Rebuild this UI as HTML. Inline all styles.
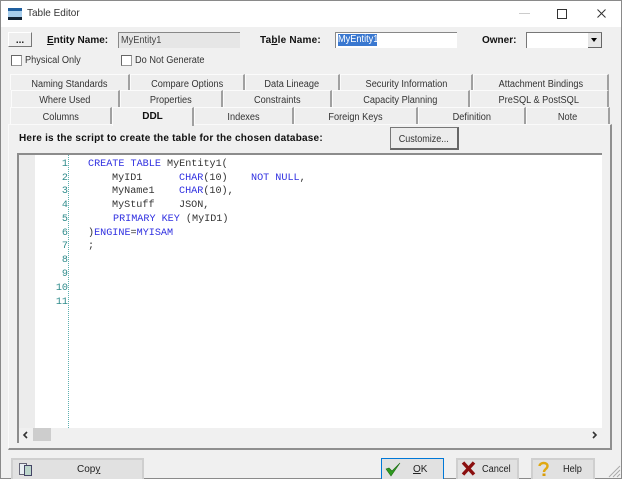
<!DOCTYPE html>
<html><head><meta charset="utf-8"><style>
html,body{margin:0;padding:0}
body{width:622px;height:479px;position:relative;overflow:hidden;background:#f0f0f0;font-family:"Liberation Sans",sans-serif;font-size:10px;color:#222}
div{position:absolute;white-space:nowrap}
.t{text-align:center;height:16px;line-height:20px;background:#eee;border-top:1px solid #fbfbfb;border-left:1px solid #fbfbfb;border-right:2px solid #a0a0a0;box-sizing:border-box;color:#333}
.t span{display:inline-block;line-height:14px;transform:scaleX(.92)}
.s{transform:scaleX(.92);transform-origin:0 50%}
.b{font-weight:bold;color:#111}
.c{font-family:"Liberation Mono",monospace;font-size:10.15px;line-height:14px;height:14px;color:#333}
.c i{font-style:normal;color:#2f2fe0}
.n{font-family:"Liberation Mono",monospace;font-size:10.15px;line-height:14px;height:14px;color:#2e8b8b;width:20px;left:48px;text-align:right}
.chk{width:9px;height:9px;background:#fff;border:1px solid #999;border-top-color:#666;border-left-color:#666}
.pb{height:21px;background:#e1e1e1;border:2px solid #cfcfcf;border-bottom:0;box-sizing:border-box}
</style></head><body>
<div style="left:0;top:0;width:622px;height:27px;background:#fff"></div>
<div style="left:0;top:0;width:622px;height:1px;background:#8a8a8a"></div>
<div style="left:0;top:0;width:1px;height:479px;background:#8a8a8a"></div>
<div style="right:0;top:0;width:1px;height:479px;background:#8a8a8a"></div>
<div style="left:0;top:478px;width:622px;height:1px;background:#8a8a8a"></div>
<svg style="position:absolute;left:8px;top:8px" width="14" height="13"><rect x="0" y="0" width="14" height="3" fill="#1f5f9f"/><rect x="0" y="3" width="14" height="6" fill="#a6cdec"/><rect x="0" y="9" width="14" height="3" fill="#123"/></svg>
<div class="s" style="left:27px;top:7px;font-size:10.5px;line-height:13px;color:#333;transform:scaleX(.95)">Table Editor</div>
<div style="left:519px;top:13px;width:11px;height:1px;background:#ccc"></div>
<div style="left:557px;top:9px;width:8px;height:8px;border:1px solid #333"></div>
<svg style="position:absolute;left:597px;top:9px" width="10" height="10"><path d="M.5.5l8 8M8.500.5l-8 8" stroke="#333" fill="none"/></svg>

<div style="left:8px;top:32px;width:24px;height:15px;line-height:15px;background:#eee;border:1px solid;border-color:#fff #777 #777 #fff;box-sizing:border-box;font-weight:bold;text-align:center">...</div>
<div class="b" style="left:47px;top:34px;line-height:13px"><u>E</u>ntity Name:</div>
<div style="left:118px;top:32px;width:122px;height:16px;line-height:15px;background:#e6e6e6;border-top:1px solid #888;border-left:1px solid #888;box-sizing:border-box;padding-left:2px;color:#444"><span style="display:inline-block;transform:scaleX(.92);transform-origin:0 50%">MyEntity1</span></div>
<div class="b" style="left:260px;top:34px;line-height:13px;letter-spacing:.2px">Ta<u>b</u>le Name:</div>
<div style="left:335px;top:32px;width:122px;height:16px;background:#fff;border-top:1px solid #888;border-left:1px solid #888;box-sizing:border-box"></div>
<div style="left:338px;top:34px;width:39px;height:12px;line-height:12px;background:#3a78d0;color:#fff"><span style="display:inline-block;transform:scaleX(.92);transform-origin:0 50%">MyEntity1</span></div>
<div class="b" style="left:482px;top:34px;line-height:13px">Owner:</div>
<div style="left:526px;top:32px;width:76px;height:16px;background:#fff;border-top:1px solid #777;border-left:1px solid #777;box-sizing:border-box"></div>
<div style="left:588px;top:33px;width:14px;height:15px;background:#e6e6e6;border-right:1px solid #666;border-bottom:1px solid #666;box-sizing:border-box"></div>
<div style="left:591px;top:38px;width:0;height:0;border:3px solid transparent;border-top:4px solid #000"></div>

<div class="chk" style="left:11px;top:55px"></div>
<div class="s" style="left:25px;top:54px;line-height:14px;color:#333">Physical Only</div>
<div class="chk" style="left:121px;top:55px"></div>
<div class="s" style="left:135px;top:54px;line-height:14px;color:#333">Do Not Generate</div>

<div class="t" style="left:10px;top:74px;width:120px"><span>Naming Standards</span></div>
<div class="t" style="left:130px;top:74px;width:115px"><span>Compare Options</span></div>
<div class="t" style="left:245px;top:74px;width:95px"><span>Data Lineage</span></div>
<div class="t" style="left:340px;top:74px;width:133px"><span>Security Information</span></div>
<div class="t" style="left:473px;top:74px;width:136px"><span>Attachment Bindings</span></div>
<div class="t" style="left:11px;top:90px;width:109px;height:17px"><span>Where Used</span></div>
<div class="t" style="left:120px;top:90px;width:103px;height:17px"><span>Properties</span></div>
<div class="t" style="left:223px;top:90px;width:109px;height:17px"><span>Constraints</span></div>
<div class="t" style="left:332px;top:90px;width:138px;height:17px"><span>Capacity Planning</span></div>
<div class="t" style="left:470px;top:90px;width:139px;height:17px"><span>PreSQL &amp; PostSQL</span></div>
<div class="t" style="left:10px;top:107px;width:102px;height:18px"><span>Columns</span></div>
<div class="t" style="left:194px;top:107px;width:100px;height:17px"><span>Indexes</span></div>
<div class="t" style="left:294px;top:107px;width:124px;height:17px"><span>Foreign Keys</span></div>
<div class="t" style="left:418px;top:107px;width:108px;height:17px"><span>Definition</span></div>
<div class="t" style="left:526px;top:107px;width:84px;height:17px"><span>Note</span></div>

<div style="left:8px;top:124px;width:604px;height:326px;background:#f0f0f0;border-left:1px solid #fafafa;border-top:1px solid #fafafa;border-right:2px solid #8f8f8f;border-bottom:2px solid #8f8f8f;box-sizing:border-box"></div>
<div class="b" style="left:112px;top:107px;width:82px;height:19px;line-height:18px;text-align:center;background:#f0f0f0;border-top:1px solid #fbfbfb;border-left:1px solid #fbfbfb;border-right:2px solid #a0a0a0;box-sizing:border-box">DDL</div>
<div class="b" style="left:19px;top:131px;line-height:14px;letter-spacing:.21px;margin-top:0.500px">Here is the script to create the table for the chosen database:</div>
<div style="left:390px;top:127px;width:69px;height:23px;line-height:24px;text-align:center;background:#ececec;border:1px solid #777;border-right:2px solid #666;border-bottom:2px solid #666;box-sizing:border-box;color:#333"><span style="display:inline-block;line-height:14px;transform:scaleX(.9)">Customize...</span></div>

<div style="left:17px;top:153px;width:585px;height:290px;background:#fff;border-top:2px solid #8c8c8c;border-left:2px solid #8c8c8c;box-sizing:border-box"></div>
<div style="left:19px;top:155px;width:16px;height:273px;background:#ececec"></div>
<div style="left:68px;top:155px;width:0;height:273px;border-left:1px dotted #5fb0b0"></div>
<div style="left:19px;top:428px;width:583px;height:15px;background:#f0f0f0"></div>
<div style="left:33px;top:428px;width:18px;height:13px;background:#cdcdcd"></div>
<svg style="position:absolute;left:22px;top:431px" width="8" height="8"><path d="M5 1L2 4l3 3" stroke="#333" stroke-width="1.600" fill="none"/></svg>
<svg style="position:absolute;left:590px;top:431px" width="8" height="8"><path d="M3 1l3 3-3 3" stroke="#333" stroke-width="1.600" fill="none"/></svg>

<div class="n" style="top:158px">1</div><div class="n" style="top:172px">2</div><div class="n" style="top:185px">3</div><div class="n" style="top:199px">4</div><div class="n" style="top:213px">5</div><div class="n" style="top:227px">6</div><div class="n" style="top:240px">7</div><div class="n" style="top:254px">8</div><div class="n" style="top:268px">9</div><div class="n" style="top:282px">10</div><div class="n" style="top:296px">11</div>
<div class="c" style="left:88px;top:158px"><i>CREATE TABLE</i> MyEntity1(</div>
<div class="c" style="left:112px;top:172px">MyID1</div><div class="c" style="left:179px;top:172px"><i>CHAR</i>(10)</div><div class="c" style="left:251px;top:172px"><i>NOT NULL</i>,</div>
<div class="c" style="left:112px;top:185px">MyName1</div><div class="c" style="left:179px;top:185px"><i>CHAR</i>(10),</div>
<div class="c" style="left:112px;top:199px">MyStuff</div><div class="c" style="left:179px;top:199px">JSON,</div>
<div class="c" style="left:113px;top:213px"><i>PRIMARY KEY</i> (MyID1)</div>
<div class="c" style="left:88px;top:227px">)<i>ENGINE</i>=<i>MYISAM</i></div>
<div class="c" style="left:88px;top:240px">;</div>

<div class="pb" style="left:11px;top:458px;width:133px"></div>
<svg style="position:absolute;left:18px;top:461px" width="16" height="16"><rect x="1.500" y="2.500" width="7" height="11" fill="#e8eef2" stroke="#667"/><rect x="6.500" y="4.500" width="7" height="10" fill="#bcd6cc" stroke="#446"/></svg>
<div style="left:77px;top:463px;line-height:14px;color:#222">Cop<u>y</u></div>

<div class="pb" style="left:381px;top:458px;width:63px;border:1px solid #0078d7;border-bottom:0"></div>
<svg style="position:absolute;left:385px;top:461px" width="16" height="16"><path d="M1 8l5 7 9-13-8 8-3-3z" fill="#2f9a1f" stroke="#1b6b12" stroke-width=".6"/></svg>
<div style="left:413px;top:463px;line-height:14px;color:#222"><u>O</u>K</div>

<div class="pb" style="left:456px;top:458px;width:63px"></div>
<svg style="position:absolute;left:461px;top:461px" width="15" height="15"><path d="M2 1.500l11 12M13 1.500L2 13.500" stroke="#8a0f0f" stroke-width="3.400" fill="none"/></svg>
<div class="s" style="left:482px;top:463px;line-height:14px;color:#222">Cancel</div>

<div class="pb" style="left:531px;top:458px;width:64px"></div>
<svg style="position:absolute;left:537px;top:461px" width="13" height="16"><path d="M2.500 5C3 1 10.500 1 10.500 5c0 3-3.500 3-3.500 6" stroke="#e0a810" stroke-width="2.400" fill="none"/><rect x="5.500" y="12.500" width="3" height="2.500" fill="#d89c08"/></svg>
<div class="s" style="left:563px;top:463px;line-height:14px;color:#222">Help</div>
<svg style="position:absolute;left:608px;top:465px" width="13" height="13"><path d="M1 12L12 1M5 12l7-7M9 12l3-3" stroke="#aaa" fill="none"/></svg>
</body></html>
